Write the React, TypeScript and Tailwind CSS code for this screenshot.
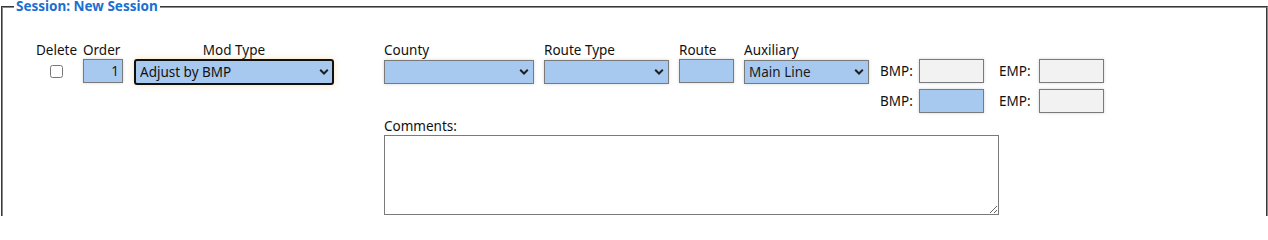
import { useState } from 'react';

const field =
  'h-[24px] border border-[#7a7a7a] shadow-[0_0_3px_rgba(0,0,0,0.18)] text-[13.5px] text-[#1a1a1a] outline-none';
const blue = 'bg-[#a8c9ef]';
const grey = 'bg-[#f2f2f2]';

function Chevron() {
  return (
    <svg
      className="pointer-events-none absolute right-[5px] top-1/2 -translate-y-1/2"
      width="10"
      height="7"
      viewBox="0 0 10 7"
    >
      <path d="M1.2 1.3 L5 5 L8.8 1.3" fill="none" stroke="#1f1f1f" strokeWidth="2" />
    </svg>
  );
}

function Select({
  width,
  value,
  options,
  focused,
}: {
  width: string;
  value: string;
  options: string[];
  focused?: boolean;
}) {
  const [v, setV] = useState(value);
  return (
    <div className={`relative ${width}`}>
      <select
        value={v}
        onChange={e => setV(e.target.value)}
        className={`w-full appearance-none pl-[4px] pr-5 ${blue} ${
          focused
            ? 'h-[26px] -my-px rounded-[3px] border-2 border-[#101010] text-[13.5px] text-[#111] outline-none shadow-[0_0_6px_rgba(236,196,130,0.55)]'
            : field
        }`}
      >
        {options.map(o => (
          <option key={o} value={o}>
            {o}
          </option>
        ))}
      </select>
      <Chevron />
    </div>
  );
}

function Column({
  label,
  width,
  center,
  children,
}: {
  label: string;
  width: string;
  center?: boolean;
  children: React.ReactNode;
}) {
  return (
    <div className={`flex flex-col shrink-0 ${width} ${center ? 'items-center' : 'items-start'}`}>
      <span className="h-[17px] leading-[17px] text-[13.5px] text-[#111] whitespace-nowrap">{label}</span>
      {children}
    </div>
  );
}

export default function App() {
  const [order, setOrder] = useState('1');

  return (
    <div
      className="bg-white w-[1268px] h-[216px] overflow-hidden"
      style={{ fontFamily: '"Noto Sans", "Open Sans", sans-serif' }}
    >
      <fieldset className="ml-px w-[1267px] min-h-[240px] border-2 border-[#8c8c8c] [border-style:groove] pl-[11px] pt-[29px] pr-2 m-0">
        <legend className="px-[2px] text-[13.5px] leading-[13px] font-bold text-[#1b6fd1] whitespace-nowrap">
          Session: New Session
        </legend>

        <div className="flex items-start pl-[21px]">
          {/* Row controls */}
          <Column label="Delete" width="w-[43px]" center>
            <div className="h-[24px] flex items-center">
              <input type="checkbox" className="w-[13px] h-[13px] m-0" />
            </div>
          </Column>

          <div className="ml-[5px]">
            <Column label="Order" width="w-[40px]">
              <input
                value={order}
                onChange={e => setOrder(e.target.value)}
                className={`${field} ${blue} w-[40px] text-right pr-[3px]`}
              />
            </Column>
          </div>

          <div className="ml-[11px]">
            <Column label="Mod Type" width="w-[200px]" center>
              <Select
                width="w-[200px]"
                value="Adjust by BMP"
                options={['Adjust by BMP', 'Adjust by EMP', 'Add Segment']}
                focused
              />
            </Column>
          </div>

          <div className="ml-[50px] flex flex-col">
            <div className="flex items-start">
              <Column label="County" width="w-[150px]">
                <Select width="w-[150px]" value="" options={['']} />
              </Column>
              <div className="ml-[10px]">
                <Column label="Route Type" width="w-[125px]">
                  <Select width="w-[125px]" value="" options={['']} />
                </Column>
              </div>
              <div className="ml-[10px]">
                <Column label="Route" width="w-[55px]">
                  <input className={`${field} ${blue} w-[55px] px-1`} />
                </Column>
              </div>
              <div className="ml-[10px]">
                <Column label="Auxiliary" width="w-[125px]">
                  <Select width="w-[125px]" value="Main Line" options={['Main Line', 'Ramp', 'Frontage Road']} />
                </Column>
              </div>

              {/* BMP / EMP */}
              <div className="ml-[11px] pt-[17px] flex flex-col gap-[6px] text-[13.5px] text-[#111]">
                <div className="flex items-center">
                  <span className="w-[39px]">BMP:</span>
                  <input className={`${field} ${grey} w-[65px] px-1`} />
                  <span className="ml-[15px] w-[40px]">EMP:</span>
                  <input className={`${field} ${grey} w-[65px] px-1`} />
                </div>
                <div className="flex items-center">
                  <span className="w-[39px]">BMP:</span>
                  <input className={`${field} ${blue} w-[65px] px-1`} />
                  <span className="ml-[15px] w-[40px]">EMP:</span>
                  <input className={`${field} ${grey} w-[65px] px-1`} />
                </div>
              </div>
            </div>

            {/* Comments */}
            <div className="mt-[4px] flex flex-col">
              <span className="h-[18px] leading-[18px] text-[13.5px] text-[#111]">Comments:</span>
              <textarea className="w-[615px] h-[80px] border border-[#7a7a7a] bg-white text-[13.5px] outline-none p-1" />
            </div>
          </div>
        </div>
      </fieldset>
    </div>
  );
}
